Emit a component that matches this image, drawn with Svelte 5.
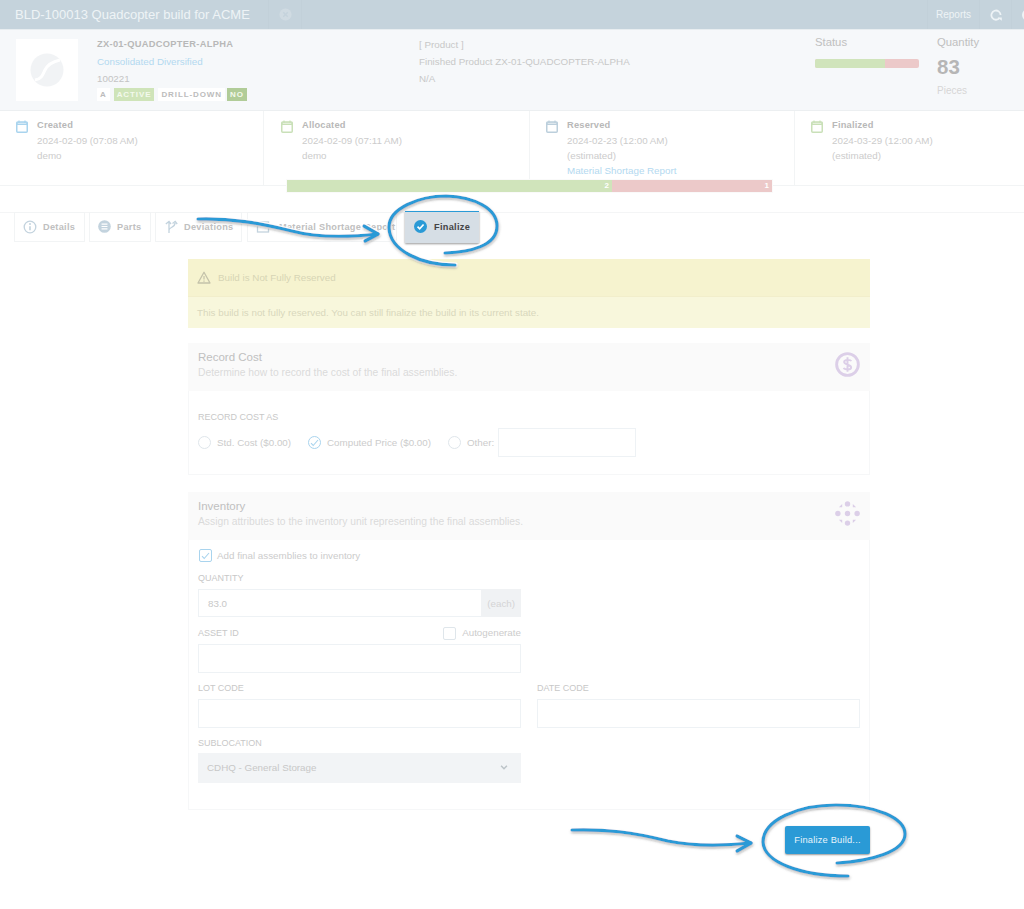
<script>
	const dates = [
		{ label: 'Created', color: '#a9d4ee', lines: ['2024-02-09 (07:08 AM)', 'demo'] },
		{ label: 'Allocated', color: '#c9e0b8', lines: ['2024-02-09 (07:11 AM)', 'demo'] },
		{ label: 'Reserved', color: '#bccfdc', lines: ['2024-02-23 (12:00 AM)', '(estimated)'], link: 'Material Shortage Report' },
		{ label: 'Finalized', color: '#c9e0b8', lines: ['2024-03-29 (12:00 AM)', '(estimated)'] }
	];
</script>

<div class="page">
	<header class="topbar">
		<h1>BLD-100013 Quadcopter build for ACME</h1>
		<span class="close-cell">
			<svg width="13" height="13" viewBox="0 0 14 14">
				<circle cx="7" cy="7" r="6.5" fill="#d0dbe2" />
				<path d="M4.6 4.6l4.8 4.8M9.4 4.6l-4.8 4.8" stroke="#c5d3dc" stroke-width="1.6" />
			</svg>
		</span>
		<div class="top-actions">
			<span class="top-cell reports">Reports</span>
			<span class="top-cell icon-cell">
				<svg width="12" height="12" viewBox="0 0 12 12" fill="none">
					<path d="M9.600 9A4.600 4.600 0 1 1 10.600 6" stroke="#eef3f6" stroke-width="1.800" />
					<path d="M7.600 8.600h4.200v3.200z" fill="#eef3f6" />
				</svg>
			</span>
			<span class="top-cell last-cell">
				<svg width="12" height="12" viewBox="0 0 12 12"><circle cx="6" cy="6" r="5" fill="none" stroke="#eef3f6" stroke-width="2" /></svg>
			</span>
		</div>
	</header>

	<section class="summary">
		<div class="logo">
			<svg width="34" height="34" viewBox="0 0 34 34">
				<circle cx="17" cy="17" r="16.500" fill="#f1f3f5" />
				<path d="M5 27C12 26 13 21 15 17S21 9 30 7" fill="none" stroke="#fff" stroke-width="3" />
			</svg>
		</div>
		<div class="part">
			<strong>ZX-01-QUADCOPTER-ALPHA</strong>
			<span class="link">Consolidated Diversified</span>
			<span>100221</span>
			<div class="badges">
				<span class="tag">A</span>
				<span class="tag green">ACTIVE</span>
				<span class="tag plain">DRILL-DOWN</span>
				<span class="tag dark">NO</span>
			</div>
		</div>
		<div class="product">
			<span>[ Product ]</span>
			<span>Finished Product ZX-01-QUADCOPTER-ALPHA</span>
			<span>N/A</span>
		</div>
		<div class="status">
			<span class="stat-label">Status</span>
			<div class="status-bar"><i></i></div>
		</div>
		<div class="quantity">
			<span class="stat-label">Quantity</span>
			<b>83</b>
			<small>Pieces</small>
		</div>
	</section>

	<section class="timeline">
		{#each dates as d}
			<div class="step">
				<svg class="cal" width="12" height="13" viewBox="0 0 12 13" fill="none" style="color: {d.color}">
					<rect x="0.750" y="2" width="10.500" height="10.250" rx="1" stroke="currentColor" stroke-width="1.500" />
					<path d="M1 3h10v1.500H1zM3 0.500v2M9 0.500v2" stroke="currentColor" stroke-width="1.200" />
				</svg>
				<div class="step-text">
					<strong>{d.label}</strong>
					{#each d.lines as line}<span>{line}</span>{/each}
					{#if d.link}<span class="link">{d.link}</span>{/if}
				</div>
			</div>
		{/each}
		<div class="progress"><span class="done">2</span><span class="short">1</span></div>
	</section>

	<nav class="tabs">
		<span class="tab w-details">
			<svg width="14" height="14" viewBox="0 0 14 14" fill="none"><circle cx="7" cy="7" r="5.800" stroke="#c3d3de" stroke-width="1.300" /><path d="M7 6.200v4" stroke="#c3d3de" stroke-width="1.600" /><circle cx="7" cy="4" r="1" fill="#c3d3de" /></svg>
			Details
		</span>
		<span class="tab w-parts">
			<svg width="13" height="13" viewBox="0 0 14 14"><circle cx="7" cy="7" r="6.800" fill="#c3d3de" /><path d="M3.800 4.400h6.400M3.800 7h6.400M3.800 9.600h6.400" stroke="#fff" stroke-width="1.300" /></svg>
			Parts
		</span>
		<span class="tab w-dev">
			<svg width="14" height="14" viewBox="0 0 14 14" fill="none" stroke="#c3d3de" stroke-width="1.300"><path d="M5 13V2M1.800 4L5 1.500 7 4M5 10c0-3 6-2 6-7M8.500 3.500l2.700-2 2 2.500" /></svg>
			Deviations
		</span>
		<span class="tab w-report">
			<svg width="14" height="14" viewBox="0 0 14 14" fill="none" stroke="#c3d3de" stroke-width="1.300"><rect x="1.500" y="2" width="11" height="10" /><path d="M1.500 5.500h11" /></svg>
			Material Shortage Report
		</span>
		<span class="tab active">
			<svg width="13" height="13" viewBox="0 0 14 14"><circle cx="7" cy="7" r="7" fill="#2a9ad6" /><path d="M3.800 7.200l2.300 2.300 4.200-4.700" fill="none" stroke="#fff" stroke-width="1.800" /></svg>
			Finalize
		</span>
	</nav>

	<main class="content">
		<div class="alert">
			<div class="alert-head">
				<svg width="14" height="13" viewBox="0 0 14 13" fill="none"><path d="M7 1.200L13 12H1z" stroke="#c4c2aa" stroke-width="1.300" stroke-linejoin="round" /><path d="M7 5v3.500M7 9.500v1.200" stroke="#c4c2aa" stroke-width="1.200" /></svg>
				Build is Not Fully Reserved
			</div>
			<div class="alert-body">This build is not fully reserved. You can still finalize the build in its current state.</div>
		</div>

		<div class="card">
			<div class="card-head">
				<div>
					<h2>Record Cost</h2>
					<p>Determine how to record the cost of the final assemblies.</p>
				</div>
				<svg width="25" height="25" viewBox="0 0 26 26" fill="none">
					<circle cx="13" cy="13" r="11.300" stroke="#dccfe8" stroke-width="3" />
					<path d="M17 9.500C16 7.800 9.500 7.500 9.500 10.500S16.800 13 16.800 16S10 18.500 9 16.500M13 5.500v15" stroke="#dccfe8" stroke-width="2" />
				</svg>
			</div>
			<div class="card-body cost-body">
				<label class="field-label">RECORD COST AS</label>
				<div class="radios">
					<span class="radio"></span><span class="radio-text first">Std. Cost ($0.00)</span>
					<span class="radio on"><svg width="9" height="8" viewBox="0 0 9 8" fill="none"><path d="M1 4.200l2.200 2.300L8 1" stroke="#a9d4ee" stroke-width="1.100" /></svg></span><span class="radio-text second">Computed Price ($0.00)</span>
					<span class="radio"></span><span class="radio-text third">Other:</span>
					<span class="input other"></span>
				</div>
			</div>
		</div>

		<div class="card">
			<div class="card-head">
				<div>
					<h2>Inventory</h2>
					<p>Assign attributes to the inventory unit representing the final assemblies.</p>
				</div>
				<svg width="25" height="25" viewBox="0 0 26 26" fill="#dccfe8">
					<circle cx="13" cy="3" r="2.800" /><circle cx="3" cy="13" r="2.800" /><circle cx="13" cy="13" r="2.800" /><circle cx="23" cy="13" r="2.800" /><circle cx="13" cy="23" r="2.800" />
					<path d="M4 6.500L7.500 3V6.500zM22 6.500L18.500 3V6.500zM4 19.500L7.500 23V19.500zM22 19.500L18.500 23V19.500z" />
				</svg>
			</div>
			<div class="card-body inv-body">
				<div class="check-row">
					<span class="check on"><svg width="9" height="8" viewBox="0 0 9 8" fill="none"><path d="M1 4.200l2.200 2.300L8 1" stroke="#a9d4ee" stroke-width="1.100" /></svg></span>
					Add final assemblies to inventory
				</div>
				<div class="form-grid">
					<div class="field">
						<label class="field-label">QUANTITY</label>
						<div class="input qty"><span class="value">83.0</span><span class="addon">(each)</span></div>
					</div>
					<div></div>
					<div class="field">
						<div class="label-row">
							<label class="field-label">ASSET ID</label>
							<span class="auto"><span class="check"></span>Autogenerate</span>
						</div>
						<div class="input"></div>
					</div>
					<div></div>
					<div class="field">
						<label class="field-label">LOT CODE</label>
						<div class="input"></div>
					</div>
					<div class="field">
						<label class="field-label">DATE CODE</label>
						<div class="input"></div>
					</div>
					<div class="field sub">
						<label class="field-label">SUBLOCATION</label>
						<div class="select">
							CDHQ - General Storage
							<svg width="8" height="5" viewBox="0 0 9 6" fill="none"><path d="M1 1l3.500 3.500L8 1" stroke="#bcc3c8" stroke-width="1.800" /></svg>
						</div>
					</div>
				</div>
			</div>
		</div>

		<div class="actions"><button>Finalize Build...</button></div>
	</main>

	<!-- hand drawn callouts on top of the screenshot -->
	<svg class="callouts" width="1024" height="909" viewBox="0 0 1024 909" fill="none">
		<defs>
			<filter id="halo" x="-10%" y="-30%" width="120%" height="160%">
				<feMorphology in="SourceAlpha" operator="dilate" radius="0.700" result="fat" />
				<feFlood flood-color="#fff" />
				<feComposite in2="fat" operator="in" result="white" />
				<feDropShadow in="SourceGraphic" dx="0.500" dy="1.500" stdDeviation="0.800" flood-color="#666" flood-opacity="0.600" result="shadowed" />
				<feMerge>
					<feMergeNode in="white" />
					<feMergeNode in="shadowed" />
				</feMerge>
			</filter>
		</defs>
		<g stroke="#2a9ad6" stroke-width="3.200" stroke-linecap="round" stroke-linejoin="round" filter="url(#halo)">
			<path d="M198 219C232 218 258 223 292 231C318 238 350 237 378 234" />
			<path d="M364 226L378 234L365 241" />
			<path d="M455 265C420 265 390 250 389 228C388 208 420 196 446 196C474 197 497 208 497 226C497 246 470 252 445 253" />
			<path d="M572 830C606 829 632 832 668 841C692 846 722 846 751 843" />
			<path d="M737 836L751 843L737 851" />
			<path d="M848 876C800 876 764 862 763 842C763 820 798 805 836 805C876 805 905 818 905 834C905 852 870 861 837 863" />
		</g>
	</svg>
</div>

<style>
	:global(body) {
		margin: 0;
		background: #fff;
		font-family: 'Liberation Sans', Arial, sans-serif;
	}

	.page {
		position: relative;
		width: 1024px;
		height: 909px;
		overflow: hidden;
		font-size: 9.800px;
		color: #c4c4c4;
	}

	.topbar {
		display: flex;
		align-items: center;
		height: 29px;
		background: #c5d3dc;
		color: #eef3f6;
		padding-left: 15px;
	}

	.topbar h1 {
		margin: 0;
		font-size: 13px;
		font-weight: 400;
		width: 253px;
		white-space: nowrap;
	}

	.close-cell {
		display: flex;
		align-items: center;
		justify-content: center;
		width: 32px;
		height: 29px;
		border-left: 1px solid #c2d0d9;
		border-right: 1px solid #c2d0d9;
	}

	.top-actions {
		display: flex;
		margin-left: auto;
		height: 29px;
	}

	.top-cell {
		display: flex;
		align-items: center;
		border-left: 1px solid #c2d0d9;
	}

	.reports {
		padding: 0 8px;
		font-size: 10px;
	}

	.icon-cell {
		width: 31px;
		justify-content: center;
	}

	.last-cell {
		width: 13px;
		padding-left: 10px;
		box-sizing: border-box;
		overflow: hidden;
	}

	.last-cell svg {
		flex: none;
	}

	.summary {
		display: flex;
		height: 82px;
		box-sizing: border-box;
		background: #f6f8fa;
		border-top: 1px solid #e8edf0;
		border-bottom: 1px solid #eceff1;
		padding: 9px 0 0 16px;
	}

	.logo {
		display: flex;
		align-items: center;
		justify-content: center;
		width: 62px;
		height: 62px;
		background: #fff;
	}

	.part,
	.product {
		display: flex;
		flex-direction: column;
		line-height: 17px;
		margin-top: -3px;
	}

	.part {
		width: 322px;
		margin-left: 19px;
	}

	.part strong {
		font-size: 9.300px;
		letter-spacing: 0.300px;
		color: #b8b8b8;
	}

	.link {
		color: #b3d9f0;
	}

	.badges {
		display: flex;
		gap: 4px;
		margin-top: 1px;
		height: 13px;
		font-size: 8px;
		font-weight: 700;
		letter-spacing: 0.900px;
		line-height: 13px;
	}

	.tag {
		padding: 0 3px;
		background: #fff;
		color: #bcbcbc;
	}

	.tag.green {
		background: #cfe4b9;
		color: #f3f9ec;
		padding: 0 3px;
	}

	.tag.plain {
		margin-right: -2px;
	}

	.tag.dark {
		background: #b1cc98;
		color: #f3f9ec;
		padding: 0 3px;
	}

	.product {
		width: 396px;
		color: #c8c8c8;
	}

	.stat-label {
		display: block;
		font-size: 11.300px;
		line-height: 13px;
		color: #c0c0c0;
	}

	.status {
		width: 122px;
		margin-top: -3px;
	}

	.status-bar {
		width: 104px;
		height: 9px;
		margin-top: 10px;
		background: #ecc9c9;
		border-radius: 2px;
		overflow: hidden;
	}

	.status-bar i {
		display: block;
		width: 70px;
		height: 9px;
		background: #d0e4bb;
	}

	.quantity {
		margin-top: -3px;
	}

	.quantity b {
		display: block;
		font-size: 20.500px;
		line-height: 23px;
		margin-top: 6px;
		color: #b6b6b6;
	}

	.quantity small {
		display: block;
		font-size: 10px;
		line-height: 12px;
		margin-top: 7px;
		color: #d6d6d6;
	}

	.timeline {
		position: relative;
		display: grid;
		grid-template-columns: 264px 266px 265px 229px;
		height: 75px;
		box-sizing: border-box;
		border-bottom: 1px solid #f2f4f5;
	}

	.step {
		display: flex;
		gap: 9px;
		padding: 7px 0 0 16px;
		border-right: 1px solid #f2f4f5;
	}

	.step:nth-child(2) {
		padding-left: 17px;
	}

	.step:nth-child(4) {
		border-right: 0;
	}

	.cal {
		flex: none;
		margin-top: 2px;
	}

	.step-text {
		display: flex;
		flex-direction: column;
		line-height: 15px;
		color: #cccccc;
	}

	.step-text strong {
		font-size: 9.300px;
		letter-spacing: 0.200px;
		color: #b8b8b8;
	}

	.progress {
		position: absolute;
		left: 286px;
		top: 68px;
		display: flex;
		width: 485px;
		height: 12px;
		border: 1px solid #fafafa;
		font-size: 8px;
		font-weight: 700;
		line-height: 12px;
		color: #fff;
		text-align: right;
	}

	.progress span {
		box-sizing: border-box;
		padding-right: 3px;
	}

	.done {
		width: 325px;
		background: #d0e4bb;
	}

	.short {
		flex: 1;
		background: #ecc9c9;
	}

	.tabs {
		display: flex;
		align-items: flex-start;
		height: 32px;
		margin-top: 25px;
		padding-left: 14px;
		font-size: 9.200px;
		font-weight: 700;
		letter-spacing: 0.300px;
		color: #c0c0c0;
		position: relative;
	}

	.tabs::before {
		content: '';
		position: absolute;
		left: 0;
		right: 0;
		top: 1px;
		height: 1px;
		background: #f4f5f6;
	}

	.tab {
		position: relative;
		display: flex;
		align-items: center;
		gap: 6px;
		height: 30px;
		margin-top: 1px;
		box-sizing: border-box;
		padding: 0 0 1px 8px;
		background: #fff;
		border: 1px solid #f2f4f5;
		white-space: nowrap;
		overflow: hidden;
	}

	.w-details {
		width: 71px;
	}

	.w-parts {
		width: 62px;
		margin-left: 4px;
	}

	.w-dev {
		width: 87px;
		margin-left: 4px;
	}

	.w-report {
		width: 150px;
		margin-left: 5px;
		gap: 9px;
	}

	.tab.active {
		width: 74px;
		margin: 0 0 0 8px;
		height: 32px;
		padding: 0 0 2px 9px;
		gap: 7px;
		background: #d6dee5;
		border: 0;
		border-top: 1px solid #2a9ad6;
		box-shadow: 0 1px 2px #999;
		color: #444;
	}

	.content {
		width: 682px;
		margin: 16px 0 0 188px;
	}

	.alert {
		height: 69px;
		background: #f8f7dc;
		color: #d6d5b5;
	}

	.alert-head {
		display: flex;
		align-items: center;
		gap: 7px;
		height: 38px;
		box-sizing: border-box;
		padding-left: 9px;
		background: #f6f3cf;
		border-bottom: 1px solid #f2eecb;
	}

	.alert-body {
		padding: 9px;
		line-height: 13px;
		color: #d9d8bd;
	}

	.card {
		margin-top: 15px;
		box-sizing: border-box;
		border: 1px solid #f6f7f8;
		border-top: 0;
	}

	.card + .card {
		margin-top: 17px;
	}

	.card-head {
		display: flex;
		justify-content: space-between;
		align-items: flex-start;
		height: 48px;
		box-sizing: border-box;
		padding: 7px 10px 0;
		margin: 0 -1px;
		background: #fafafa;
	}

	.card-head h2 {
		margin: 0;
		font-size: 11.500px;
		font-weight: 400;
		line-height: 15px;
		color: #c0c0c0;
	}

	.card-head p {
		margin: 2px 0 0;
		font-size: 10.300px;
		line-height: 12px;
		color: #dadada;
	}

	.card-head svg {
		margin-top: 2px;
	}

	.cost-body {
		height: 83px;
		padding: 21px 9px 0;
		box-sizing: border-box;
	}

	.inv-body {
		height: 269px;
		padding: 9px 9px 0;
		box-sizing: border-box;
	}

	.field-label {
		display: block;
		font-size: 9px;
		line-height: 11px;
		color: #c8c8c8;
	}

	.radios {
		display: flex;
		align-items: center;
		margin-top: 5px;
		color: #cccccc;
	}

	.radio {
		display: flex;
		align-items: center;
		justify-content: center;
		flex: none;
		width: 13px;
		height: 13px;
		border: 1px solid #dfe6eb;
		border-radius: 50%;
		box-sizing: border-box;
	}

	.radio.on {
		border-color: #a9d4ee;
	}

	.radio-text {
		margin-left: 6px;
	}

	.first {
		width: 91px;
	}

	.second {
		width: 121px;
	}

	.third {
		width: 31px;
	}

	.input {
		display: block;
		height: 29px;
		box-sizing: border-box;
		border: 1px solid #eef2f5;
	}

	.other {
		width: 138px;
	}

	.check-row {
		display: flex;
		align-items: center;
		gap: 5px;
		height: 13px;
		color: #cccccc;
		padding-left: 1px;
	}

	.check {
		display: flex;
		align-items: center;
		justify-content: center;
		flex: none;
		width: 13px;
		height: 13px;
		box-sizing: border-box;
		border: 1px solid #dfe6eb;
		border-radius: 2px;
	}

	.check.on {
		border-color: #a9d4ee;
	}

	.form-grid {
		display: grid;
		grid-template-columns: 323px 323px;
		column-gap: 16px;
		row-gap: 10px;
		margin-top: 11px;
	}

	.field .field-label {
		margin-bottom: 5px;
	}

	.field.sub .field-label {
		margin-bottom: 4px;
	}

	.label-row {
		display: flex;
		justify-content: space-between;
		height: 16px;
	}

	.auto {
		display: flex;
		align-items: flex-start;
		gap: 6px;
		margin-top: -1px;
		color: #cccccc;
	}

	.qty {
		display: flex;
		justify-content: space-between;
		align-items: center;
		height: 28px;
		margin-bottom: 1px;
		padding-left: 9px;
		color: #c8c8c8;
	}

	.addon {
		display: flex;
		align-items: center;
		height: 28px;
		padding: 0 6px;
		margin-right: -1px;
		background: #f0f2f4;
		color: #d4d4d4;
	}

	.select {
		display: flex;
		align-items: center;
		justify-content: space-between;
		height: 30px;
		box-sizing: border-box;
		padding: 0 13px 1px 9px;
		background: #f2f4f6;
		color: #c8c8c8;
	}

	.actions {
		display: flex;
		justify-content: flex-end;
		margin-top: 16px;
	}

	button {
		width: 85px;
		height: 28px;
		padding: 0;
		border: 0;
		border-radius: 2px;
		background: #2a9ad6;
		box-shadow: 0 1px 2px #999;
		color: #e8f4fb;
		font: 9.300px 'Liberation Sans', Arial, sans-serif;
		letter-spacing: 0.200px;
	}

	.callouts {
		position: absolute;
		left: 0;
		top: 0;
		pointer-events: none;
	}
</style>
